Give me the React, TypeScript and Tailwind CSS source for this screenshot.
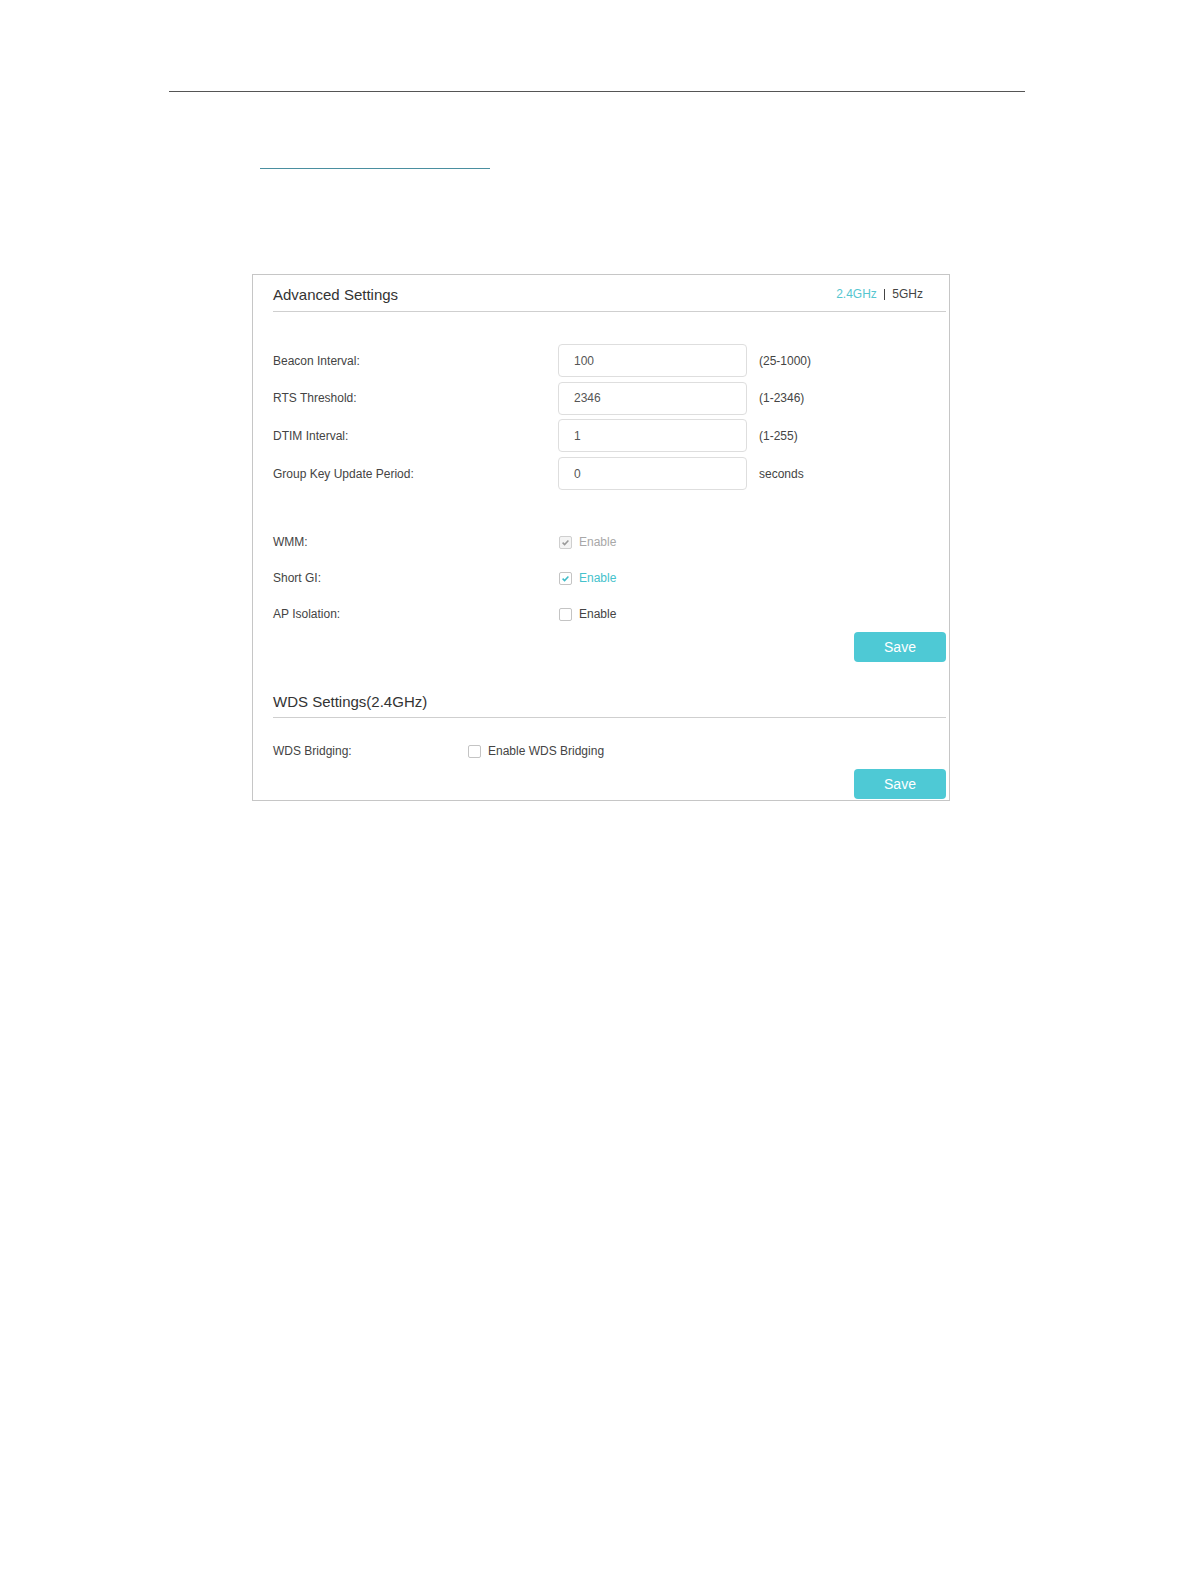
import type { ReactNode } from "react";

const fields = [
  { label: "Beacon Interval:", value: "100", hint: "(25-1000)" },
  { label: "RTS Threshold:", value: "2346", hint: "(1-2346)" },
  { label: "DTIM Interval:", value: "1", hint: "(1-255)" },
  { label: "Group Key Update Period:", value: "0", hint: "seconds" },
];

type BoxState = "disabled" | "checked" | "off";

function CheckBox({ state }: { state: BoxState }) {
  const stroke = state === "disabled" ? "#9a9a9a" : "#3fbcc8";
  return (
    <span
      className={
        "flex h-[13px] w-[13px] items-center justify-center rounded-[2px] border " +
        (state === "disabled" ? "border-[#cfcfcf] bg-[#f4f4f4]" : "border-[#c4c4c4] bg-white")
      }
    >
      {state !== "off" && (
        <svg width="9" height="9" viewBox="0 0 9 9">
          <path d="M1.6 4.6 L3.6 6.6 L7.4 2.4" fill="none" stroke={stroke} strokeWidth="1.5" />
        </svg>
      )}
    </span>
  );
}

function CheckRow({ label, state, text, labelWidth }: { label: string; state: BoxState; text: string; labelWidth: string }) {
  const textColor =
    state === "disabled" ? "text-[#a8a8a8]" : state === "checked" ? "text-[#45c2cc]" : "text-[#444]";
  return (
    <div className="flex h-[36px] items-center text-[12px]">
      <div className={labelWidth + " text-[#444]"}>{label}</div>
      <div className="flex items-center gap-[7px] pl-[1px]">
        <CheckBox state={state} />
        <span className={textColor}>{text}</span>
      </div>
    </div>
  );
}

function SaveButton() {
  return (
    <div className="flex justify-end pr-[3px]">
      <button className="h-[30px] w-[92px] rounded-[4px] bg-[#4ec9d5] text-[14px] text-white">Save</button>
    </div>
  );
}

function SectionTitle({ children, right, pad }: { children: ReactNode; right?: ReactNode; pad: string }) {
  return (
    <div className={"mr-[3px] flex items-end justify-between border-b border-[#cfcfcf] " + pad}>
      <h2 className="text-[15px] leading-[20px] text-[#333]">{children}</h2>
      {right}
    </div>
  );
}

export default function App() {
  return (
    <div className="min-h-[1582px] w-[1196px] bg-white font-['Liberation_Sans',Arial,sans-serif]">
      <div className="pl-[169px] pt-[91px]">
        <div className="h-px w-[856px] bg-[#555]" />
      </div>

      <div className="ml-[260px] mt-[76px] h-px w-[230px] bg-[#4a8fa0]" />

      <div className="ml-[252px] mt-[105px] w-[698px] border border-[#c6c6c6] pb-[1px] pl-[20px]">
        {/* Advanced settings */}
        <div className="pt-[9px]">
          <SectionTitle
            pad="pb-[6px]"
            right={
              <div className="flex items-center gap-[7px] pb-[1px] pr-[23px] text-[12px] leading-[20px]">
                <span className="text-[#55c6d0]">2.4GHz</span>
                <span className="h-[11px] w-[1.5px] bg-[#444]" />
                <span className="text-[#444]">5GHz</span>
              </div>
            }
          >
            Advanced Settings
          </SectionTitle>
        </div>

        <div className="mt-[32px] flex flex-col gap-[4.7px]">
          {fields.map((f) => (
            <div key={f.label} className="flex h-[33px] items-center text-[12px]">
              <div className="w-[285px] text-[#444]">{f.label}</div>
              <div className="flex h-full w-[189px] items-center rounded-[4px] border border-[#dedede] pl-[15px] text-[#555]">
                {f.value}
              </div>
              <div className="ml-[12px] text-[#444]">{f.hint}</div>
            </div>
          ))}
        </div>

        <div className="mt-[34px]">
          <CheckRow label="WMM:" state="disabled" text="Enable" labelWidth="w-[285px]" />
          <CheckRow label="Short GI:" state="checked" text="Enable" labelWidth="w-[285px]" />
          <CheckRow label="AP Isolation:" state="off" text="Enable" labelWidth="w-[285px]" />
        </div>
        <SaveButton />

        {/* WDS */}
        <div className="mt-[30px]">
          <SectionTitle pad="pb-[5px]">WDS Settings(2.4GHz)</SectionTitle>
        </div>
        <div className="mt-[15px]">
          <CheckRow label="WDS Bridging:" state="off" text="Enable WDS Bridging" labelWidth="w-[194px]" />
        </div>
        <SaveButton />
      </div>
    </div>
  );
}
